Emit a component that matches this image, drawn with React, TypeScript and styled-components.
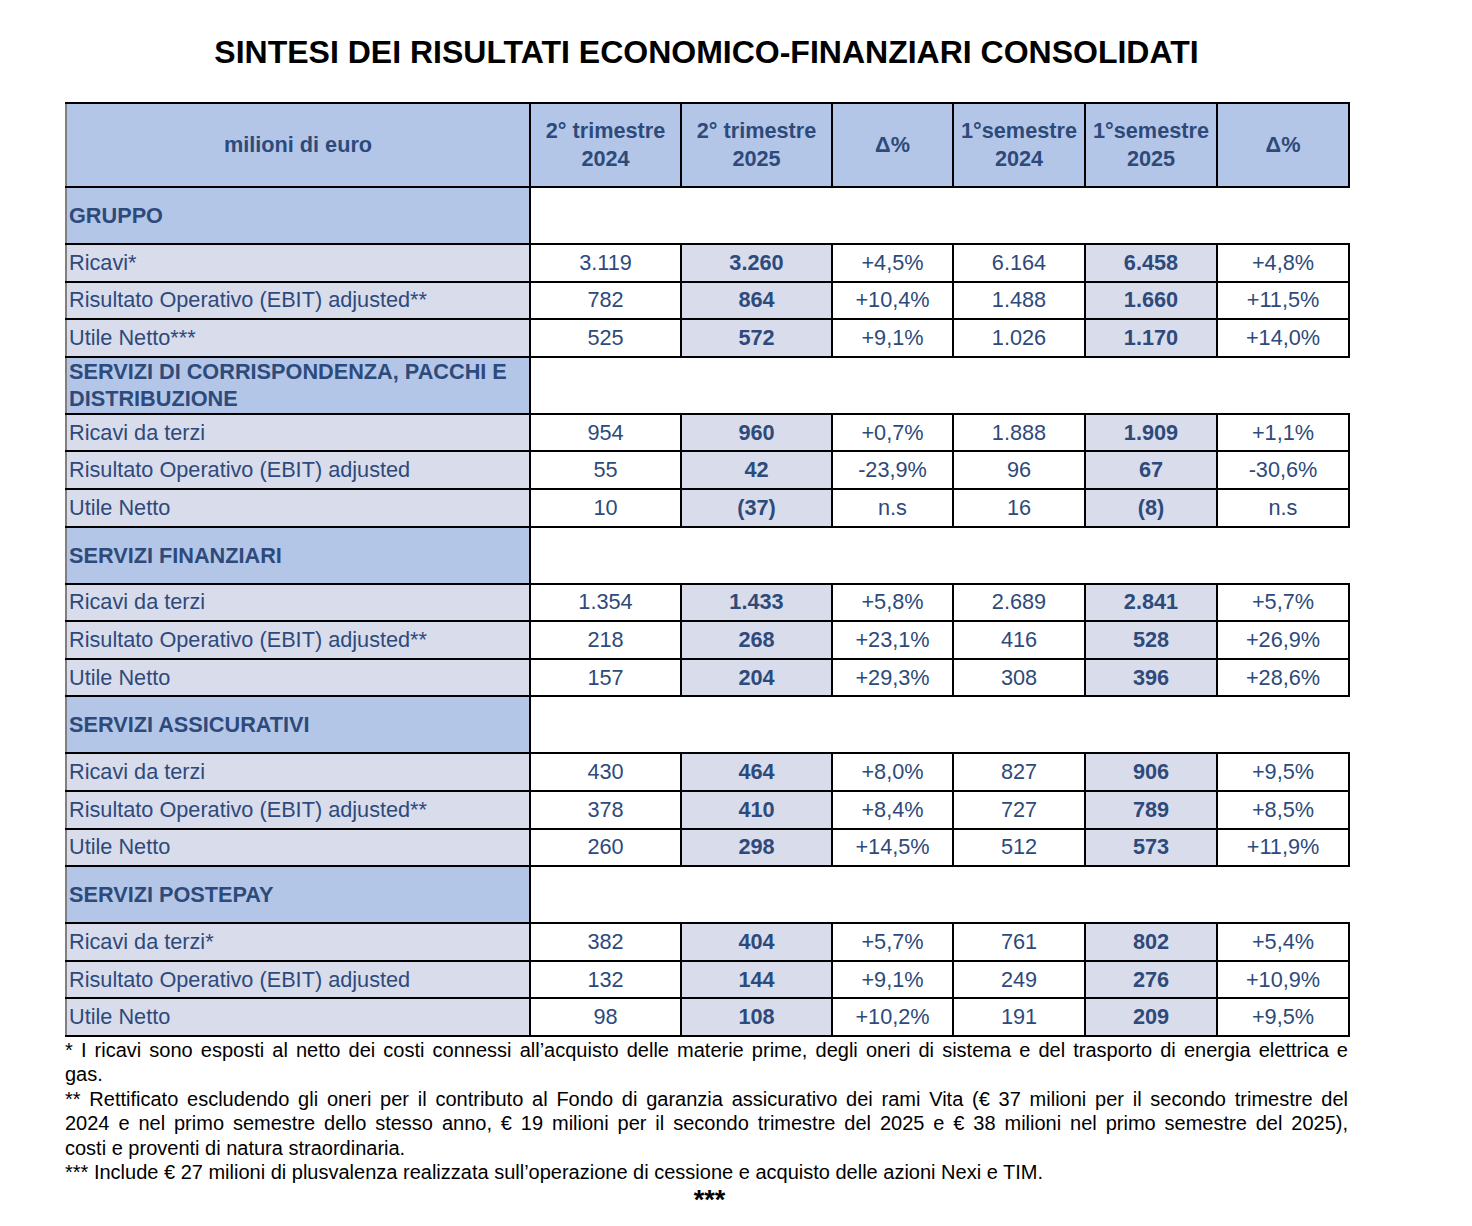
import React from "react";
import styled, { createGlobalStyle } from "styled-components";

const Global = createGlobalStyle`
  html, body { margin: 0; padding: 0; background: #fff; }
  body { font-family: "Liberation Sans", Arial, sans-serif; }
`;

const Page = styled.div`
  width: 1472px;
  padding: 34px 0 0 65px;
  box-sizing: border-box;
`;

const Content = styled.div`
  width: 1283px;
  display: flex;
  flex-direction: column;
`;

const Title = styled.h1`
  margin: 0 0 32px;
  text-align: center;
  font-size: 32px;
  line-height: 36px;
  font-weight: 700;
  color: #000;
`;

const Table = styled.table`
  width: 1283px;
  border-collapse: collapse;
  table-layout: fixed;
  color: #2d4a7b;
  font-size: 21.7px;
`;

const HeadRow = styled.tr`
  height: 84px;
`;

const HeadCell = styled.th<{ $first?: boolean }>`
  background: #b4c6e7;
  border: 2px solid #000;
  border-left-color: ${(p) => (p.$first ? "#808080" : "#000")};
  font-weight: 700;
  text-align: center;
  vertical-align: middle;
  line-height: 28px;
  padding: 0;
  white-space: nowrap;
`;

const SectionRow = styled.tr`
  height: 57px;
`;

const SectionLabel = styled.td`
  background: #b4c6e7;
  border: 2px solid #000;
  border-left-color: #808080;
  font-weight: 700;
  line-height: 27px;
  padding: 0 8px 0 2px;
  vertical-align: middle;
`;

const SectionBlank = styled.td`
  background: #fff;
  border: none;
`;

const DataRow = styled.tr`
  height: 37.6px;
`;

const LabelCell = styled.td`
  background: #d9dceb;
  border: 2px solid #000;
  border-left-color: #808080;
  padding: 0 2px;
  white-space: nowrap;
  line-height: 24px;
`;

const ValueCell = styled.td<{ $bold?: boolean }>`
  background: ${(p) => (p.$bold ? "#d9dceb" : "#fff")};
  font-weight: ${(p) => (p.$bold ? 700 : 400)};
  border: 2px solid #000;
  text-align: center;
  padding: 0 0 0 0;
  line-height: 24px;
`;

const Notes = styled.div`
  margin-top: 1px;
  color: #000;
  font-size: 20px;
  line-height: 24.5px;
  display: flex;
  flex-direction: column;
`;

const NoteLine = styled.div<{ $justify?: boolean }>`
  text-align: ${(p) => (p.$justify ? "justify" : "left")};
  text-align-last: ${(p) => (p.$justify ? "justify" : "left")};
  white-space: nowrap;
`;

const Stars = styled.div`
  text-align: center;
  font-weight: 700;
  color: #000;
  font-size: 27px;
  line-height: 26px;
  padding-left: 6px;
  margin-top: 2px;
`;

type Row = { label: string; v: string[] };
type Section = { title: React.ReactNode; rows: Row[] };

const sections: Section[] = [
  {
    title: "GRUPPO",
    rows: [
      { label: "Ricavi*", v: ["3.119", "3.260", "+4,5%", "6.164", "6.458", "+4,8%"] },
      { label: "Risultato Operativo (EBIT) adjusted**", v: ["782", "864", "+10,4%", "1.488", "1.660", "+11,5%"] },
      { label: "Utile Netto***", v: ["525", "572", "+9,1%", "1.026", "1.170", "+14,0%"] },
    ],
  },
  {
    title: (
      <>
        SERVIZI DI CORRISPONDENZA, PACCHI E
        <br />
        DISTRIBUZIONE
      </>
    ),
    rows: [
      { label: "Ricavi da terzi", v: ["954", "960", "+0,7%", "1.888", "1.909", "+1,1%"] },
      { label: "Risultato Operativo (EBIT) adjusted", v: ["55", "42", "-23,9%", "96", "67", "-30,6%"] },
      { label: "Utile Netto", v: ["10", "(37)", "n.s", "16", "(8)", "n.s"] },
    ],
  },
  {
    title: "SERVIZI FINANZIARI",
    rows: [
      { label: "Ricavi da terzi", v: ["1.354", "1.433", "+5,8%", "2.689", "2.841", "+5,7%"] },
      { label: "Risultato Operativo (EBIT) adjusted**", v: ["218", "268", "+23,1%", "416", "528", "+26,9%"] },
      { label: "Utile Netto", v: ["157", "204", "+29,3%", "308", "396", "+28,6%"] },
    ],
  },
  {
    title: "SERVIZI ASSICURATIVI",
    rows: [
      { label: "Ricavi da terzi", v: ["430", "464", "+8,0%", "827", "906", "+9,5%"] },
      { label: "Risultato Operativo (EBIT) adjusted**", v: ["378", "410", "+8,4%", "727", "789", "+8,5%"] },
      { label: "Utile Netto", v: ["260", "298", "+14,5%", "512", "573", "+11,9%"] },
    ],
  },
  {
    title: "SERVIZI POSTEPAY",
    rows: [
      { label: "Ricavi da terzi*", v: ["382", "404", "+5,7%", "761", "802", "+5,4%"] },
      { label: "Risultato Operativo (EBIT) adjusted", v: ["132", "144", "+9,1%", "249", "276", "+10,9%"] },
      { label: "Utile Netto", v: ["98", "108", "+10,2%", "191", "209", "+9,5%"] },
    ],
  },
];

const widths = [464, 151, 151, 121, 132, 132, 132];

const noteLines: { text: string; justify: boolean }[] = [
  { text: "* I ricavi sono esposti al netto dei costi connessi all’acquisto delle materie prime, degli oneri di sistema e del trasporto di energia elettrica e", justify: true },
  { text: "gas.", justify: false },
  { text: "** Rettificato escludendo gli oneri per il contributo al Fondo di garanzia assicurativo dei rami Vita (€ 37 milioni per il secondo trimestre del", justify: true },
  { text: "2024 e nel primo semestre dello stesso anno, € 19 milioni per il secondo trimestre del 2025 e € 38 milioni nel primo semestre del 2025),", justify: true },
  { text: "costi e proventi di natura straordinaria.", justify: false },
  { text: "*** Include € 27 milioni di plusvalenza realizzata sull’operazione di cessione e acquisto delle azioni Nexi e TIM.", justify: false },
];

export default function App() {
  return (
    <Page>
      <Global />
      <Content>
        <Title>SINTESI DEI RISULTATI ECONOMICO-FINANZIARI CONSOLIDATI</Title>
        <Table>
          <colgroup>
            {widths.map((w, i) => (
              <col key={i} style={{ width: w }} />
            ))}
          </colgroup>
          <thead>
            <HeadRow>
              <HeadCell $first>milioni di euro</HeadCell>
              <HeadCell>
                2° trimestre
                <br />
                2024
              </HeadCell>
              <HeadCell>
                2° trimestre
                <br />
                2025
              </HeadCell>
              <HeadCell>Δ%</HeadCell>
              <HeadCell>
                1°semestre
                <br />
                2024
              </HeadCell>
              <HeadCell>
                1°semestre
                <br />
                2025
              </HeadCell>
              <HeadCell>Δ%</HeadCell>
            </HeadRow>
          </thead>
          <tbody>
            {sections.map((s, si) => (
              <React.Fragment key={si}>
                <SectionRow>
                  <SectionLabel>{s.title}</SectionLabel>
                  <SectionBlank colSpan={6} />
                </SectionRow>
                {s.rows.map((r, ri) => (
                  <DataRow key={ri}>
                    <LabelCell>{r.label}</LabelCell>
                    {r.v.map((val, vi) => (
                      <ValueCell key={vi} $bold={vi === 1 || vi === 4}>
                        {val}
                      </ValueCell>
                    ))}
                  </DataRow>
                ))}
              </React.Fragment>
            ))}
          </tbody>
        </Table>
        <Notes>
          {noteLines.map((l, i) => (
            <NoteLine key={i} $justify={l.justify}>
              {l.text}
            </NoteLine>
          ))}
        </Notes>
        <Stars>***</Stars>
      </Content>
    </Page>
  );
}
